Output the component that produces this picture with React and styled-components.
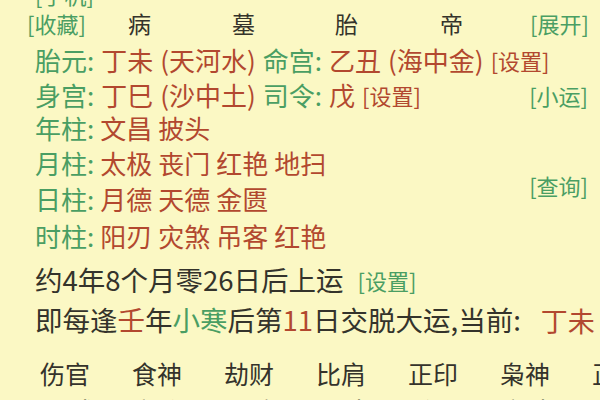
import React from 'react';
import styled, { createGlobalStyle } from 'styled-components';

const Global = createGlobalStyle`
  html, body { margin: 0; padding: 0; background: #fbf8c4; }
  body {
    width: 600px; height: 400px; overflow: hidden;
    font-family: "Noto Sans CJK SC", "Noto Sans", sans-serif;
  }
`;

const C = { green: '#4a9e63', red: '#b2482f', dark: '#34332b' };

const Page = styled.main`
  margin-top: -17px;
  padding-right: 12px;
  display: flex;
  flex-direction: column;
`;

const Row = styled.div`
  display: flex;
  align-items: center;
  justify-content: space-between;
  height: ${p => p.$h}px;
  padding-left: ${p => p.$pl ?? 35}px;
  font-size: ${p => p.$size ?? 26}px;
  line-height: 1;
  white-space: nowrap;
`;

const Line = styled.div`
  display: flex;
  align-items: center;
  gap: ${p => p.$gap ?? 6}px;
`;

const Label = styled.span`
  color: ${C.green};
`;

const Value = styled.span`
  color: ${C.red};
`;

const Plain = styled.span`
  color: ${C.dark};
`;

const Hi = styled.span`
  color: ${p => p.$c};
`;

const Tag = styled.span`
  color: ${p => p.$c ?? C.green};
  font-size: 22px;
  white-space: nowrap;
  margin-left: ${p => p.$ml ?? 0}px;
  padding-top: ${p => p.$pt ?? 0}px;
`;

const Big = styled.span`
  color: ${C.red};
  font-size: 27px;
  margin-left: 20px;
`;

const Header = styled.div`
  display: grid;
  grid-template-columns: 101px 104px 103px 105px 90px auto;
  grid-template-rows: 36px;
  align-items: center;
  height: 36px;
  padding-left: 27px;
  font-size: 23px;
  line-height: 1;
  color: ${C.dark};
  white-space: nowrap;
`;

const Block = styled.div`
  display: flex;
  justify-content: space-between;
  align-items: center;
`;

const Stack = styled.div`
  display: flex;
  flex-direction: column;
`;

const Spacer = styled.div`
  height: ${p => p.$h}px;
`;

const Grid = styled.div`
  display: grid;
  grid-template-columns: repeat(7, 92px);
  align-items: center;
  height: ${p => p.$h}px;
  padding-left: 40px;
  font-size: 25px;
  line-height: 1;
  color: ${C.dark};
  white-space: nowrap;
`;

const shens = ['伤官', '食神', '劫财', '比肩', '正印', '枭神', '正财'];
const gans = ['丙 戌', '辛 卯', '乙 亥', '丁 未', '壬 子', '庚 申', '甲 辰'];

export default function App() {
  return (
    <>
      <Global />
      <Page>
        <Row $h={22}>
          <Tag>[手机]</Tag>
        </Row>
        <Header>
          <Tag>[收藏]</Tag>
          <span>病</span>
          <span>墓</span>
          <span>胎</span>
          <span>帝</span>
          <Tag>[展开]</Tag>
        </Header>
        <Row $h={37}>
          <Line $gap={7}>
            <Label>胎元:</Label>
            <Value>丁未</Value>
            <Value>(天河水)</Value>
            <Label>命宫:</Label>
            <Value>乙丑</Value>
            <Value>(海中金)</Value>
            <Tag $c={C.red}>[设置]</Tag>
          </Line>
        </Row>
        <Row $h={33}>
          <Line $gap={7}>
            <Label>身宫:</Label>
            <Value>丁巳</Value>
            <Value>(沙中土)</Value>
            <Label>司令:</Label>
            <Value>戊</Value>
            <Tag $c={C.red}>[设置]</Tag>
          </Line>
          <Tag>[小运]</Tag>
        </Row>
        <Row $h={34}>
          <Line>
            <Label>年柱:</Label>
            <Value>文昌</Value>
            <Value>披头</Value>
          </Line>
        </Row>
        <Block>
          <Stack>
            <Row $h={35}>
              <Line>
                <Label>月柱:</Label>
                <Value>太极</Value>
                <Value>丧门</Value>
                <Value>红艳</Value>
                <Value>地扫</Value>
              </Line>
            </Row>
            <Row $h={37}>
              <Line>
                <Label>日柱:</Label>
                <Value>月德</Value>
                <Value>天德</Value>
                <Value>金匮</Value>
              </Line>
            </Row>
          </Stack>
          <Tag $pt={8}>[查询]</Tag>
        </Block>
        <Row $h={37}>
          <Line>
            <Label>时柱:</Label>
            <Value>阳刃</Value>
            <Value>灾煞</Value>
            <Value>吊客</Value>
            <Value>红艳</Value>
          </Line>
        </Row>
        <Row $h={52} $size={27.5}>
          <Line $gap={0}>
            <Plain>约4年8个月零26日后上运</Plain>
            <Tag $ml={14}>[设置]</Tag>
          </Line>
        </Row>
        <Row $h={28} $size={27.5}>
          <Line $gap={0}>
            <Plain>
              即每逢<Hi $c={C.red}>壬</Hi>年<Hi $c={C.green}>小寒</Hi>后第<Hi $c={C.red}>11</Hi>日交脱大运,当前:
            </Plain>
            <Big>丁未</Big>
          </Line>
        </Row>
        <Spacer $h={19} />
        <Grid $h={40}>
          {shens.map(s => <span key={s}>{s}</span>)}
        </Grid>
        <Grid $h={34}>
          {gans.map(s => <span key={s}>{s}</span>)}
        </Grid>
      </Page>
    </>
  );
}
